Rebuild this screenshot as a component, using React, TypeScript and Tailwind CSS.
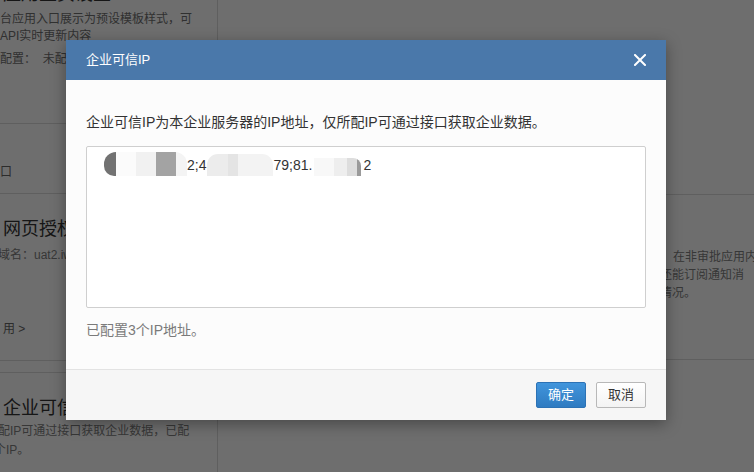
import React from 'react';

const font = "font-['Liberation_Sans','Noto_Sans_CJK_SC',sans-serif]";

// mosaic blocks that hide part of the IP list
const Mask: React.FC<{ parts: [string, number][]; className?: string }> = ({ parts, className }) => (
  <span className={`inline-flex overflow-hidden ${className || ''}`}>
    {parts.map(([c, w], i) => (
      <span key={i} className="h-full" style={{ background: c, width: w }} />
    ))}
  </span>
);

const App: React.FC = () => {
  return (
    <div className={`relative w-[754px] h-[472px] overflow-hidden bg-white ${font}`}>
      {/* background page */}
      <div className="flex h-full">
        <div className="w-[218px] shrink-0 border-r border-[#dcdcdc] flex flex-col">
          <div className="h-[124px] border-b border-[#dcdcdc] whitespace-nowrap">
            <div className="-mt-[18px] pl-[3px] text-[18px] leading-[24px] text-[#333]">应用主页设置</div>
            <div className="mt-[5px] text-[12px] leading-[17px] text-[#707070]">台应用入口展示为预设模板样式，可</div>
            <div className="text-[12px] leading-[17px] text-[#707070]">API实时更新内容</div>
            <div className="mt-[6px] text-[12px] leading-[17px] text-[#707070]">配置：&nbsp;&nbsp;未配置</div>
          </div>
          <div className="h-[70px] border-b border-[#dcdcdc] flex items-end pb-[12px]">
            <div className="text-[12px] leading-[17px] text-[#666]">口</div>
          </div>
          <div className="h-[167px] border-b border-[#dcdcdc] flex flex-col whitespace-nowrap">
            <div className="mt-[23px] pl-[3px] text-[18px] leading-[24px] text-[#333]">网页授权及JS-SDK</div>
            <div className="mt-[6px] -ml-[2px] text-[12px] leading-[17px] text-[#808080]">域名：uat2.iworkcloud.com</div>
            <div className="mt-auto mb-[22px] pl-[3px] text-[12px] leading-[17px] text-[#666]">用 &gt;</div>
          </div>
          <div className="h-[11px]" />
          <div className="flex-1 border-t border-[#dcdcdc] whitespace-nowrap">
            <div className="mt-[23px] pl-[3px] text-[18px] leading-[24px] text-[#333]">企业可信IP</div>
            <div className="mt-[2px] -ml-[2px] text-[12px] leading-[19px] text-[#808080]">配IP可通过接口获取企业数据，已配</div>
            <div className="-ml-[6px] text-[12px] leading-[19px] text-[#808080]">个IP。</div>
          </div>
        </div>
        <div className="flex-1 flex flex-col">
          <div className="h-[195px] border-b border-[#dcdcdc]" />
          <div className="h-[165px] border-b border-[#dcdcdc] whitespace-nowrap text-[12px] leading-[18px] text-[#808080]">
            <div className="mt-[53px] pl-[455px]">在非审批应用内</div>
            <div className="pl-[442px]">还能订阅通知消</div>
            <div className="pl-[442px]">情况。</div>
          </div>
        </div>
      </div>

      {/* overlay */}
      <div className="absolute inset-0 bg-black/[0.57]" />

      {/* dialog */}
      <div className="absolute left-[66px] top-[40px] w-[600px] bg-[#fcfcfc] shadow-[0_4px_14px_rgba(0,0,0,0.35)]">
        <div className="h-[40px] bg-[#4a78aa] flex items-center justify-between pl-[20px] pr-[20px]">
          <span className="text-white text-[13px]">企业可信IP</span>
          <svg width="12" height="12" viewBox="0 0 12 12">
            <path d="M1 1L11 11M11 1L1 11" stroke="white" strokeWidth="2" strokeLinecap="square" />
          </svg>
        </div>
        <div className="px-[20px] pt-[32px] pb-[29px]">
          <p className="text-[14px] leading-[20px] text-[#333]">企业可信IP为本企业服务器的IP地址，仅所配IP可通过接口获取企业数据。</p>
          <div className="mt-[14px] h-[162px] rounded-[2px] border border-[#cfcfcf] bg-white pt-[5px] pl-[17px]">
            <div className="flex items-end h-[24px] text-[14px] leading-[20px] text-[#333] whitespace-nowrap">
              <Mask
                className="h-[24px] rounded-tl-[12px] rounded-bl-[10px] rounded-tr-[12px]"
                parts={[['#727272', 12], ['#fbfbfb', 20], ['#f1f1f1', 20], ['#a3a3a3', 20], ['#f4f4f4', 11]]}
              />
              <span className="pb-[1px]">2;4</span>
              <Mask
                className="h-[22px] rounded-t-[11px] ml-[1px]"
                parts={[['#ececec', 21], ['#e4e4e4', 10], ['#f3f3f3', 35]]}
              />
              <span className="pb-[1px]">79;81.</span>
              <Mask
                className="h-[18px] ml-[2px] rounded-tr-[8px]"
                parts={[['#f8f8f8', 20], ['#eeeeee', 13], ['#dddddd', 10], ['#9a9a9a', 4]]}
              />
              <span className="ml-[2px] pb-[1px]">2</span>
            </div>
          </div>
          <p className="mt-[12px] text-[14px] leading-[20px] text-[#7a7a7a]">已配置3个IP地址。</p>
        </div>
        <div className="h-[51px] border-t border-[#e3e3e3] bg-[#f6f6f6] flex items-center justify-end gap-[10px] pr-[20px]">
          <button className="w-[50px] h-[26px] rounded-[2px] border border-[#2c72b5] bg-gradient-to-b from-[#4195dc] to-[#2f7bc1] text-white text-[13px]">
            确定
          </button>
          <button className="w-[50px] h-[26px] rounded-[2px] border border-[#b8b8b8] bg-gradient-to-b from-white to-[#f3f3f3] text-[#333] text-[13px]">
            取消
          </button>
        </div>
      </div>
    </div>
  );
};

export default App;
